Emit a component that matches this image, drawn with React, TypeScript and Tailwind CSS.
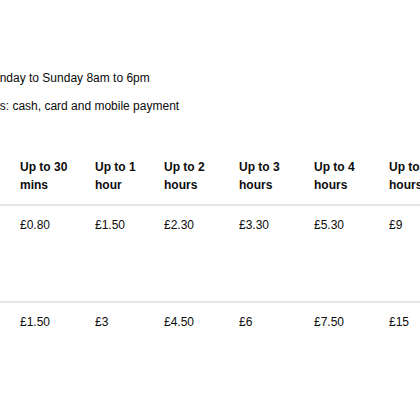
const headers = [
  ["Up to 30", "mins"],
  ["Up to 1", "hour"],
  ["Up to 2", "hours"],
  ["Up to 3", "hours"],
  ["Up to 4", "hours"],
  ["Up to 6", "hours"],
];

const widths = ["w-[75px]", "w-[69px]", "w-[75px]", "w-[75px]", "w-[75px]", "w-[75px]"];

const rows = [
  ["£0.80", "£1.50", "£2.30", "£3.30", "£5.30", "£9"],
  ["£1.50", "£3", "£4.50", "£6", "£7.50", "£15"],
];

export default function App() {
  return (
    <div className="w-[420px] h-[420px] overflow-hidden bg-white text-[12px] leading-[18px] text-[#0b0c0c] font-['Liberation_Sans',Arial,sans-serif]">
      <div className="pt-[69px]">
        <p className="ml-[-17px] whitespace-nowrap">Monday to Sunday 8am to 6pm</p>
        <p className="mt-[10px] ml-[-91px] whitespace-nowrap">
          Payment methods: cash, card and mobile payment
        </p>
      </div>

      <div className="mt-[33px] w-[600px]">
        <div className="flex pl-[20px] py-[10px] border-b-2 border-[#e6e6e6] font-bold">
          {headers.map((h, i) => (
            <div key={i} className={`${widths[i]} shrink-0 whitespace-nowrap`}>
              {h[0]}
              <br />
              {h[1]}
            </div>
          ))}
        </div>
        <div className="flex pl-[20px] pt-[10px] h-[97px] border-b-2 border-[#e6e6e6]">
          {rows[0].map((v, i) => (
            <div key={i} className={`${widths[i]} shrink-0 whitespace-nowrap`}>
              {v}
            </div>
          ))}
        </div>
        <div className="flex pl-[20px] pt-[10px] h-[60px]">
          {rows[1].map((v, i) => (
            <div key={i} className={`${widths[i]} shrink-0 whitespace-nowrap`}>
              {v}
            </div>
          ))}
        </div>
      </div>
    </div>
  );
}
